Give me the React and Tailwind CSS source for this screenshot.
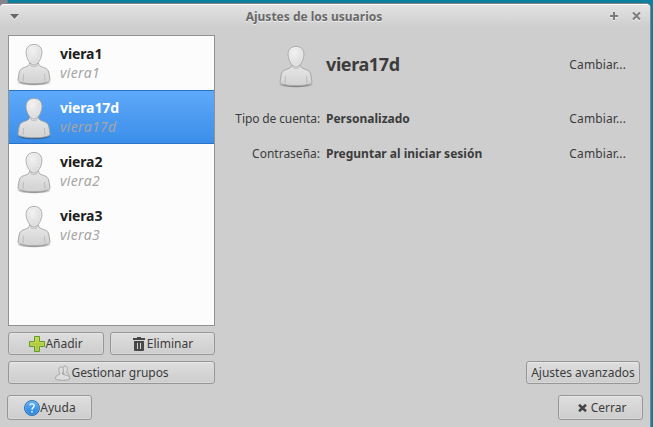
import React from "react";

const users = ["viera1", "viera17d", "viera2", "viera3"];

function Avatar({ id, className = "" }) {
  return (
    <svg width="36" height="44" viewBox="0 0 36 44" className={"shrink-0 " + className}>
      <defs>
        <radialGradient id={id + "h"} cx="0.4" cy="0.3" r="0.75">
          <stop offset="0" stopColor="#f2f2f2" />
          <stop offset="1" stopColor="#d8d8d8" />
        </radialGradient>
        <linearGradient id={id + "b"} x1="0" y1="0" x2="0" y2="1">
          <stop offset="0" stopColor="#e9e9e9" />
          <stop offset="0.5" stopColor="#dcdcdc" />
          <stop offset="1" stopColor="#d2d2d2" />
        </linearGradient>
        <radialGradient id={id + "s"}>
          <stop offset="0.6" stopColor="#000" stopOpacity="0.4" />
          <stop offset="1" stopColor="#000" stopOpacity="0" />
        </radialGradient>
      </defs>
      <ellipse cx="18" cy="39.600" rx="17.500" ry="3.200" fill={`url(#${id}s)`} />
      <path
        d="M13.500 20 C13.500 23 11.500 23.300 8.500 24.400 C4.800 25.600 3.700 27 3.100 30 L2.100 36 C1.900 38.200 2.600 38.600 5 39.300 C12 41.300 24 41.300 31 39.300 C33.400 38.600 34.100 38.200 33.900 36 L32.900 30 C32.300 27 31.200 25.600 27.500 24.400 C24.500 23.300 22.500 23 22.500 20 Z"
        fill={`url(#${id}b)`} stroke="#a0a0a0" strokeWidth="0.9"
      />
      <path d="M14 21.500 C16 24.500 20 24.500 22 21.500" fill="none" stroke="#c4c4c4" strokeWidth="1.200" />
      <path d="M7.500 31 L7 38.200 M28.500 31 L29 38.200" stroke="#b4b4b4" strokeWidth="0.8" />
      <path
        d="M18 1.500 C12.700 1.500 10.100 4.800 10.100 9.500 C10.100 14.500 13.800 22 18 22 C22.200 22 25.900 14.500 25.900 9.500 C25.900 4.800 23.300 1.500 18 1.500 Z"
        fill={`url(#${id}h)`} stroke="#a4a4a4" strokeWidth="0.9"
      />
      <path
        d="M18 2.500 C13.300 2.500 11.100 5.600 11.100 9.500 C11.100 14 14.600 21 18 21 C21.400 21 24.900 14 24.900 9.500 C24.900 5.600 22.700 2.500 18 2.500 Z"
        fill="none" stroke="#fff" strokeOpacity="0.35" strokeWidth="0.8"
      />
    </svg>
  );
}

function PlusIcon() {
  return (
    <svg width="16" height="16" viewBox="0 0 16 16" className="shrink-0">
      <defs>
        <linearGradient id="plus" x1="0" y1="0" x2="0" y2="1">
          <stop offset="0" stopColor="#c3d94e" />
          <stop offset="1" stopColor="#a3bf36" />
        </linearGradient>
      </defs>
      <path d="M5.500 .5h5v5h5v5h-5v5h-5v-5h-5v-5h5z" fill="url(#plus)" stroke="#5f9a2a" strokeLinejoin="round" />
      <path d="M6.500 1.500h3v5h5v3h-5v5h-3v-5h-5v-3h5z" fill="none" stroke="#d8e878" strokeOpacity="0.35" />
    </svg>
  );
}

function TrashIcon() {
  return (
    <svg width="12" height="14" viewBox="0 0 12 14" className="mr-[2px] shrink-0" fill="#484848">
      <path d="M4 0h4v1h4v2H0V1h4z" />
      <path fillRule="evenodd" d="M1 4h10v9q0 1-1 1H2q-1 0-1-1zM4 6v6h1V6zM7 6v6h1V6z" />
    </svg>
  );
}

function GroupIcon() {
  return (
    <svg width="16" height="16" viewBox="0 0 16 16" className="shrink-0" fill="#dedede" stroke="#999" strokeWidth="0.8">
      <path d="M9 8 C7.300 5.500 7 1 10 1 C13 1 12.700 5.500 11.500 7.500 C13.500 8 14 9.500 14.200 12 L13 13 H8z" />
      <path d="M5 9 C3.600 6.500 3 1.800 6 1.800 C9 1.800 8.600 6.500 7.200 9 C9.500 10 13.500 10 14.500 12.200 L14.800 14 C13 15.600 2 15.600 .5 14 L.8 12 C1.300 10 4 10 5 9 Z" />
    </svg>
  );
}

function HelpIcon() {
  return (
    <svg width="16" height="16" viewBox="0 0 16 16" className="shrink-0">
      <defs>
        <linearGradient id="help" x1="0" y1="0" x2="0" y2="1">
          <stop offset="0" stopColor="#62b0f5" />
          <stop offset="1" stopColor="#2480dc" />
        </linearGradient>
      </defs>
      <circle cx="8" cy="8" r="7.500" fill="url(#help)" stroke="#2467a8" strokeWidth="0.9" />
      <circle cx="8" cy="8" r="6.600" fill="none" stroke="#9bd0fa" strokeOpacity="0.4" strokeWidth="0.7" />
      <path d="M5.800 5.400 C6 3.400 10.200 3.300 10.200 5.700 C10.200 7.400 8 7.500 8 9.700" fill="none" stroke="#fff" strokeWidth="1.300" />
      <path d="M7.200 11h1.600v1.600H7.200z" fill="#fff" />
    </svg>
  );
}

function Button({ className = "", children }) {
  return (
    <button
      className={
        "flex items-center justify-center whitespace-nowrap rounded-[3px] border border-[#979797] bg-linear-to-b from-[#dedede] to-[#cdcdcd] shadow-[inset_0_1px_0_#e7e7e7,inset_0_0_0_1px_#d8d8d8] " +
        className
      }
    >
      {children}
    </button>
  );
}

function ChangeLink() {
  return <span className="mr-[14px] tracking-[0.12px]">Cambiar...</span>;
}

export default function App() {
  return (
    <div className="h-[427px] w-[653px] overflow-hidden bg-linear-to-r from-[#85858d] from-[7px] to-[#0e809e] to-[8px] pt-[3px] font-['Noto_Sans',sans-serif] text-[12px] text-[#3c3c3c]">
      <div className="flex h-[424px] w-[651px] flex-col rounded-t-[5px] border-t border-r border-[#858585] bg-[#cecece]">
        <header className="flex h-[23px] shrink-0 items-center rounded-t-[4px] border-t border-white bg-linear-to-b from-[#e3e3e3] to-[#cecece] pr-[8px] pl-[10px]">
          <svg width="9" height="6" viewBox="0 0 9 6" className="mt-[2px]">
            <path d="M0 1h9L4.500 6z" fill="#f2f2f2" />
            <path d="M0 0h9L4.500 5z" fill="#686868" />
          </svg>
          <h1 className="flex-1 pt-[2px] pr-[1px] text-center font-bold text-[#696969] [text-shadow:0_1px_0_#eee]">
            Ajustes de los usuarios
          </h1>
          <svg width="32" height="11" viewBox="0 0 32 11" className="mt-[1px]" fill="none" strokeWidth="2">
            <path d="M0 6h8M4 2v8M23 2.500l7 7M30 2.500l-7 7" stroke="#f0f0f0" />
            <path d="M0 5h8M4 1v8M23 1.500l7 7M30 1.500l-7 7" stroke="#7c7c7c" />
          </svg>
        </header>
        <main className="flex h-[357px] shrink-0 pt-[8px] pl-[8px]">
          <aside className="w-[207px]">
            <ul className="h-[291px] border border-[#929292] bg-[#fcfcfc]">
              {users.map((user, i) => (
                <li
                  key={user}
                  className={
                    "flex h-[54px] pl-[7px] " +
                    (i === 1
                      ? "border-y border-[#2a72c4] bg-linear-to-b from-[#5ea9fa] to-[#3b8ee9] text-white"
                      : "py-px text-[#202020]")
                  }
                >
                  <Avatar id={user} className="mt-[6px]" />
                  <div className="ml-[8px] pt-[7px] text-[14px] leading-[19px]">
                    <div className="font-bold tracking-[-0.1px]">{user}</div>
                    <div className="tracking-[0.3px] text-[#a5a5a5] italic">{user}</div>
                  </div>
                </li>
              ))}
            </ul>
            <div className="mt-[6px] flex gap-[6px]">
              <Button className="h-[23px] w-[96px]"><PlusIcon />Añadir</Button>
              <Button className="h-[23px] w-[105px] pl-[1px]"><TrashIcon />Eliminar</Button>
            </div>
            <Button className="mt-[6px] h-[23px] w-[207px] pl-[1px] tracking-[-0.08px]"><GroupIcon />Gestionar grupos</Button>
          </aside>
          <section className="flex w-[425px] flex-col pl-[12px]">
            <div className="flex h-[60px] items-center">
              <div className="flex w-[93px] justify-end pr-[6px]"><Avatar id="current" className="mt-[3px]" /></div>
              <h2 className="ml-[6px] flex-1 pb-[2px] text-[18px] font-bold tracking-[-0.4px]">viera17d</h2>
              <ChangeLink />
            </div>
            <div className="mt-[6px] flex h-[35px] items-center">
              <span className="w-[93px] text-right tracking-[-0.12px] whitespace-nowrap">Tipo de cuenta:</span>
              <strong className="ml-[6px] flex-1">Personalizado</strong>
              <ChangeLink />
            </div>
            <div className="flex h-[35px] items-center">
              <span className="w-[93px] text-right">Contraseña:</span>
              <strong className="ml-[6px] flex-1">Preguntar al iniciar sesión</strong>
              <ChangeLink />
            </div>
            <Button className="mt-auto h-[23px] w-[114px] self-end">Ajustes avanzados</Button>
          </section>
        </main>
        <footer className="mt-[11px] flex justify-between pr-[7px] pl-[7px]">
          <Button className="h-[25px] w-[85px] pl-[1px]"><HelpIcon />Ayuda</Button>
          <Button className="h-[25px] w-[85px] pl-[3px]">
            <svg width="9" height="8" viewBox="0 0 9 8" className="mr-[4px]" stroke="#454545" strokeWidth="2.600">
              <path d="M1 .8l7 6.400M8 .8L1 7.200" />
            </svg>
            Cerrar
          </Button>
        </footer>
      </div>
    </div>
  );
}
